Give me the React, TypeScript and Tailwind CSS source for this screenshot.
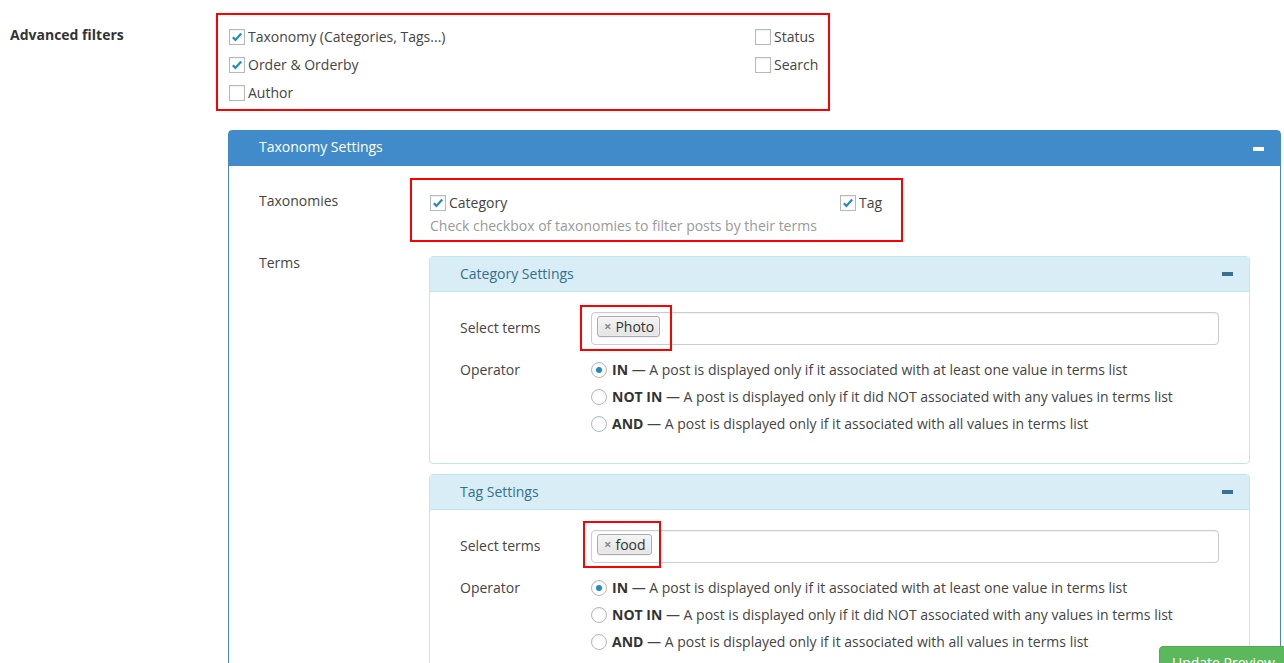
import React from "react";

const Checkbox = ({ checked }: { checked?: boolean }) => (
  <span className="flex h-4 w-4 shrink-0 items-center justify-center border border-[#b4b9be] bg-white shadow-[inset_0_1px_2px_rgba(0,0,0,0.07)]">
    {checked && (
      <svg viewBox="0 0 16 16" className="h-[14px] w-[14px]">
        <path d="M3.2 8.2l3 3.1 6.6-7.4" stroke="#1e8cbe" strokeWidth="2.5" fill="none" />
      </svg>
    )}
  </span>
);

const Radio = ({ checked }: { checked?: boolean }) => (
  <span className="flex h-4 w-4 shrink-0 items-center justify-center rounded-full border border-[#b4b9be] bg-white shadow-[inset_0_1px_2px_rgba(0,0,0,0.07)]">
    {checked && <span className="h-[6px] w-[6px] rounded-full bg-[#1e8cbe]" />}
  </span>
);

const CheckRow = ({ label, checked }: { label: string; checked?: boolean }) => (
  <div className="flex h-[28px] items-center gap-[3px]">
    <Checkbox checked={checked} />
    <span>{label}</span>
  </div>
);

const operators = [
  { key: "IN", text: "A post is displayed only if it associated with at least one value in terms list", checked: true },
  { key: "NOT IN", text: "A post is displayed only if it did NOT associated with any values in terms list" },
  { key: "AND", text: "A post is displayed only if it associated with all values in terms list" },
];

type TermPanelProps = {
  title: string;
  term: string;
  mark: string;
};

const TermPanel = ({ title, term, mark }: TermPanelProps) => (
  <div className="w-[821px] rounded-[4px] border border-[#bce8f1] bg-white">
    <div className="flex h-[35px] items-center justify-between rounded-t-[3px] border-b border-[#bce8f1] bg-[#d9edf7] pb-[1px] pl-[30px] pr-[16px] text-[#31708f]">
      <span>{title}</span>
      <span className="h-[4px] w-[11px] bg-[#3a6f96]" />
    </div>
    <div className="px-[30px] pb-[26px] pt-[20px]">
      <div className="flex items-center">
        <div className="w-[131px] pb-[2px]">Select terms</div>
        <div className="relative h-[33px] flex-1 rounded-[4px] border border-[#ccc] bg-white pl-[5px] pt-[3px] shadow-[inset_0_1px_2px_rgba(0,0,0,0.06)]">
          <span className="inline-flex h-[21px] items-center rounded-[3px] border border-[#aaa] bg-gradient-to-b from-[#f4f4f4] to-[#e4e4e4] pl-[6px] pr-[5px] text-[#333] shadow-[0_0_2px_#fff_inset,0_1px_0_rgba(0,0,0,0.05)]">
            <span className="mr-[4px] text-[13px] font-bold leading-none text-[#888]">×</span>
            <span className="leading-none">{term}</span>
          </span>
          <div className={mark} />
        </div>
      </div>
      <div className="mt-[11px] flex">
        <div className="w-[131px] leading-[27px]">Operator</div>
        <div className="flex flex-col">
          {operators.map((op) => (
            <div key={op.key} className="flex h-[27px] items-center gap-[5px]">
              <Radio checked={op.checked} />
              <span>
                <b className="text-[#333]">{op.key}</b> — {op.text}
              </span>
            </div>
          ))}
        </div>
      </div>
    </div>
  </div>
);

export default function App() {
  return (
    <div className="relative h-[663px] overflow-hidden bg-white font-['Open_Sans',sans-serif] text-[14px] leading-5 text-[#444]">
      <div className="flex pl-[10px] pt-[13px]">
        <div className="w-[206px] pt-[12px] font-bold text-[#333]">Advanced filters</div>
        <div className="flex h-[98px] w-[614px] border-2 border-[#f00] pl-[11px] pt-[8px]">
          <div className="w-[526px]">
            <CheckRow label="Taxonomy (Categories, Tags...)" checked />
            <CheckRow label="Order & Orderby" checked />
            <CheckRow label="Author" />
          </div>
          <div>
            <CheckRow label="Status" />
            <CheckRow label="Search" />
          </div>
        </div>
      </div>

      <div className="ml-[228px] mt-[19px] w-[1053px] rounded-t-[4px] border border-[#428bca]">
        <div className="flex h-[35px] items-center justify-between bg-[#428bca] pb-[3px] pl-[30px] pr-[16px] text-white">
          <span>Taxonomy Settings</span>
          <span className="mt-[3px] h-[4px] w-[11px] bg-white" />
        </div>
        <div className="pl-[30px]">
          <div className="flex pt-[12px]">
            <div className="w-[151px] pt-[13px]">Taxonomies</div>
            <div className="h-[64px] w-[493px] border-2 border-[#f00] pl-[18px] pt-[13px]">
              <div className="flex">
                <div className="flex w-[410px] items-center gap-[3px]">
                  <Checkbox checked />
                  <span>Category</span>
                </div>
                <div className="flex items-center gap-[3px]">
                  <Checkbox checked />
                  <span>Tag</span>
                </div>
              </div>
              <div className="mt-[3px] text-[#999]">Check checkbox of taxonomies to filter posts by their terms</div>
            </div>
          </div>

          <div className="mt-[11px] flex">
            <div className="w-[170px]">Terms</div>
            <div className="mt-[3px] flex flex-col gap-[10px] pb-[40px]">
              <TermPanel
                title="Category Settings"
                term="Photo"
                mark="pointer-events-none absolute left-[-12px] top-[-8px] h-[46px] w-[92px] border-2 border-[#f00]"
              />
              <TermPanel
                title="Tag Settings"
                term="food"
                mark="pointer-events-none absolute left-[-9px] top-[-10px] h-[47px] w-[78px] border-2 border-[#f00]"
              />
            </div>
          </div>
        </div>
      </div>

      <button className="absolute left-[1159px] top-[646px] whitespace-nowrap rounded-[4px] border border-[#4cae4c] bg-[#5cb85c] px-[12px] py-[6px] text-white">
        Update Preview
      </button>
    </div>
  );
}
